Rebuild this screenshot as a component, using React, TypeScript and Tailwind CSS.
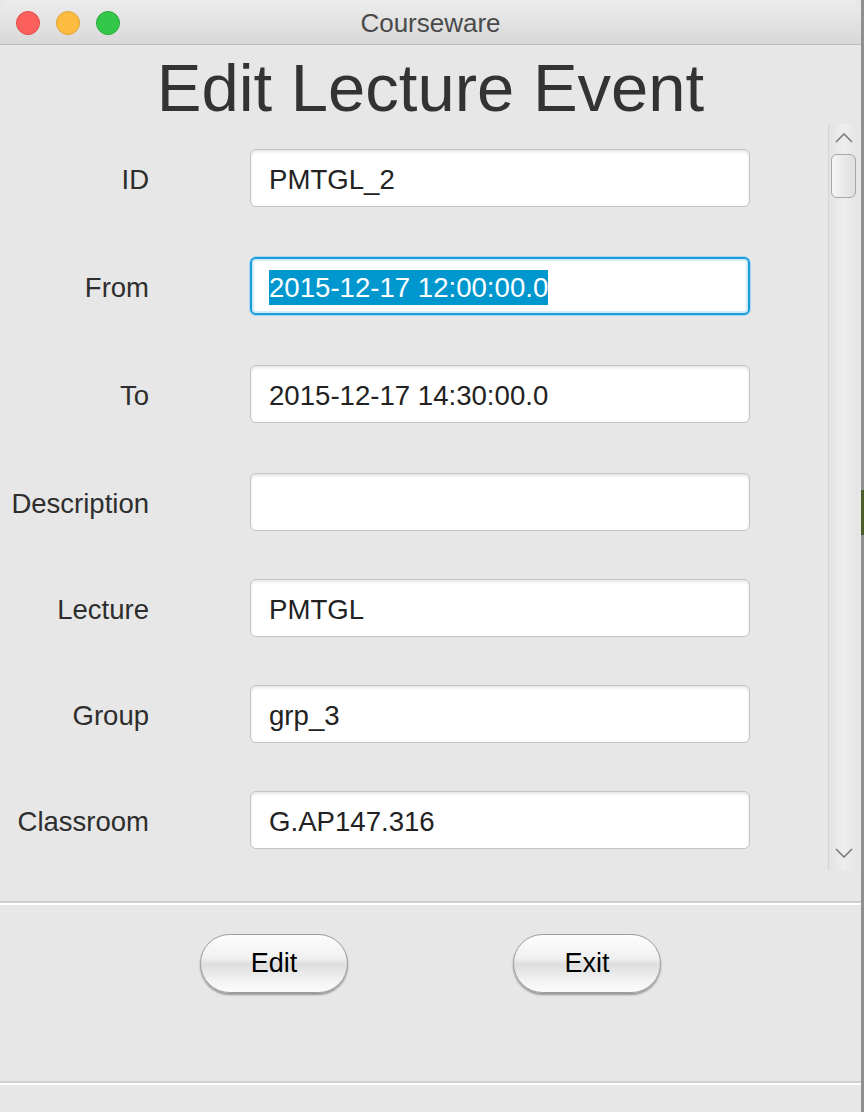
import React from "react";

const fields = [
  { label: "ID", value: "PMTGL_2" },
  { label: "From", value: "2015-12-17 12:00:00.0", focused: true },
  { label: "To", value: "2015-12-17 14:30:00.0" },
  { label: "Description", value: "" },
  { label: "Lecture", value: "PMTGL" },
  { label: "Group", value: "grp_3" },
  { label: "Classroom", value: "G.AP147.316" },
];

const Chevron: React.FC<{ up?: boolean }> = ({ up }) => (
  <svg width="18" height="10" viewBox="0 0 18 10">
    <polyline
      points={up ? "1,9 9,1 17,9" : "1,1 9,9 17,1"}
      fill="none"
      stroke="#7a7a7a"
      strokeWidth="1.6"
    />
  </svg>
);

const PillButton: React.FC<{ label: string }> = ({ label }) => (
  <button className="w-[148px] h-[59px] rounded-full border border-[#9c9c9c] bg-[linear-gradient(to_bottom,#fdfdfd_0%,#f1f1f1_40%,#dedede_52%,#f3f3f3_80%,#fcfcfc_100%)] shadow-[0_2px_2px_rgba(0,0,0,0.35)] text-[27px] text-black flex items-center justify-center">
    {label}
  </button>
);

const App: React.FC = () => {
  return (
    <div
      className="w-[864px] h-[1112px] flex bg-[#e7e7e7] overflow-hidden"
      style={{ fontFamily: '"Liberation Sans", Arial, sans-serif' }}
    >
      {/* Window */}
      <div className="w-[861px] h-full flex flex-col bg-[#e7e7e7]">
        {/* Title bar */}
        <div className="h-[45px] shrink-0 rounded-tl-[10px] rounded-tr-[10px] border-b border-[#bdbdbd] bg-[linear-gradient(to_bottom,#ececec,#d8d8d8)] relative flex items-center">
          <div className="flex items-center gap-[16px] pl-[16px] pt-[2px]">
            <span className="w-[24px] h-[24px] rounded-full bg-[#fc605c] border border-[#df4b47]" />
            <span className="w-[24px] h-[24px] rounded-full bg-[#fdbc40] border border-[#dea236]" />
            <span className="w-[24px] h-[24px] rounded-full bg-[#34c84a] border border-[#28a83a]" />
          </div>
          <div className="absolute inset-0 flex items-center justify-center pt-[3px] text-[26px] text-[#4a4a4a]">
            Courseware
          </div>
        </div>

        {/* Heading */}
        <div className="h-[77px] shrink-0 flex items-center justify-center text-[67px] leading-none text-[#333333] pt-[7px]">
          Edit Lecture Event
        </div>

        {/* Scroll pane */}
        <div className="h-[750px] shrink-0 flex">
          <div className="flex-1 flex flex-col pt-[27px]">
            {fields.map((f, i) => (
              <div
                key={f.label}
                className={`flex items-center h-[58px] ${i === 0 ? "" : i < 4 ? "mt-[50px]" : "mt-[48px]"}`}
              >
                <div className="w-[149px] text-right text-[27.5px] text-[#2e2e2e] pt-[3px]">
                  {f.label}
                </div>
                <div
                  className={`ml-[101px] w-[500px] h-[58px] rounded-[6px] bg-white flex items-center pl-[18px] pt-[3px] text-[27.6px] text-[#222222] ${
                    f.focused
                      ? "border-2 border-[#1a9cd8] shadow-[inset_0_0_0_2px_#d5ecf8,0_0_0_1px_#a9d7ef]"
                      : "border border-[#c4c4c4] shadow-[inset_0_2px_3px_rgba(0,0,0,0.10)]"
                  }`}
                >
                  {f.focused ? (
                    <span className="bg-[#0097cf] text-white leading-[35px] -ml-[1px]">
                      {f.value}
                    </span>
                  ) : (
                    f.value
                  )}
                </div>
              </div>
            ))}
          </div>

          {/* Scrollbar */}
          <div className="w-[33px] flex flex-col pt-[2px] pb-[2px]">
            <div className="w-[30px] h-full border-l border-[#d3d3d3] bg-[linear-gradient(to_right,#e3e3e3,#eeeeee_50%,#e5e5e5)] flex flex-col items-center">
              <div className="h-[26px] flex items-center justify-center pt-[2px]">
                <Chevron up />
              </div>
              <div className="w-[25px] h-[44px] mt-[4px] rounded-[6px] border border-[#a8a8a8] bg-[linear-gradient(to_right,#f6f6f6,#dedede)]" />
              <div className="flex-1" />
              <div className="h-[28px] flex items-center justify-center pb-[6px]">
                <Chevron />
              </div>
            </div>
          </div>
        </div>

        {/* Separator */}
        <div className="mt-[29px] h-[2px] shrink-0 bg-[#cfcfcf]" />
        <div className="h-[2px] shrink-0 bg-white" />

        {/* Buttons */}
        <div className="h-[176px] shrink-0 flex items-start pt-[29px]">
          <div className="ml-[200px]">
            <PillButton label="Edit" />
          </div>
          <div className="ml-[165px]">
            <PillButton label="Exit" />
          </div>
        </div>

        {/* Bottom separator */}
        <div className="h-[2px] shrink-0 bg-[#cfcfcf]" />
        <div className="h-[2px] shrink-0 bg-white" />
        <div className="flex-1" />
      </div>

      {/* Desktop edge */}
      <div className="w-[3px] h-full flex flex-col">
        <div className="h-[490px] bg-[#8f8f8f]" />
        <div className="h-[45px] bg-[#4b5e2a]" />
        <div className="flex-1 bg-[#8f8f8f]" />
      </div>
    </div>
  );
};

export default App;
